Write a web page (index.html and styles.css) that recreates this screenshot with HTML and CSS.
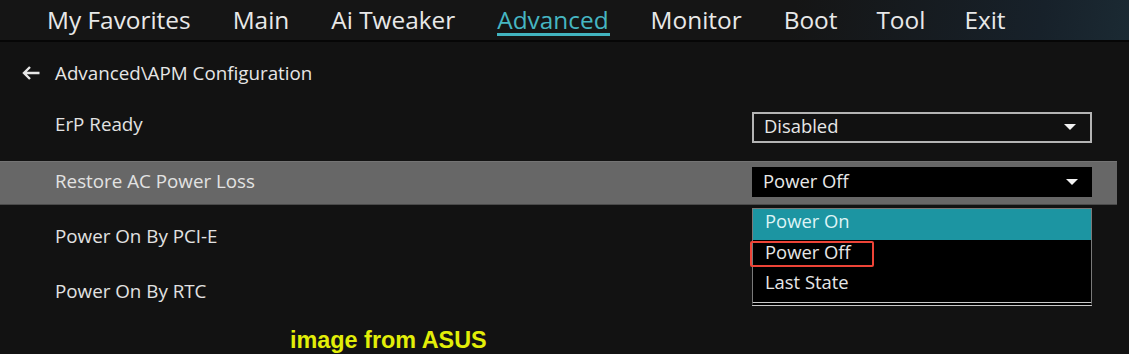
FILE: index.html
```html
<!DOCTYPE html>
<html lang="en">
<head>
<meta charset="utf-8">
<title>Advanced\APM Configuration</title>
<link rel="stylesheet" href="styles.css">
</head>
<body>
<div class="screen">
  <nav class="tabs">
    <span class="tab">My Favorites</span>
    <span class="tab">Main</span>
    <span class="tab">Ai Tweaker</span>
    <span class="tab active">Advanced</span>
    <span class="tab">Monitor</span>
    <span class="tab">Boot</span>
    <span class="tab">Tool</span>
    <span class="tab">Exit</span>
  </nav>
  <div class="crumb">
    <svg class="back" width="20" height="16" viewBox="0 0 20 16"><path d="M18.5 8H3M9 2L3 8l6 6" fill="none" stroke="#e6e6e6" stroke-width="2.4"/></svg>
    <span>Advanced\APM Configuration</span>
  </div>
  <div class="rows">
    <div class="row">
      <span class="label">ErP Ready</span>
      <div class="select outline"><span>Disabled</span><i class="caret"></i></div>
    </div>
    <div class="row selected">
      <span class="label">Restore AC Power Loss</span>
      <div class="select solid"><span>Power Off</span><i class="caret"></i>
        <ul class="menu">
          <li class="hl">Power On</li>
          <li>Power Off</li>
          <li>Last State</li>
        </ul>
        <div class="mark"></div>
      </div>
    </div>
    <div class="row">
      <span class="label">Power On By PCI-E</span>
    </div>
    <div class="row">
      <span class="label">Power On By RTC</span>
    </div>
  </div>
  <div class="credit">image from ASUS</div>
</div>
</body>
</html>
```
FILE: styles.css
```css
html, body {
  margin: 0;
  padding: 0;
  background: #121212;
}
.screen {
  width: 1129px;
  height: 354px;
  overflow: hidden;
  background: #121212;
  font-family: "Open Sans", "DejaVu Sans", sans-serif;
  color: #e2e2e2;
}
.tabs {
  display: flex;
  align-items: flex-start;
  padding-left: 47px;
  background: linear-gradient(100deg, #151515 70%, #17212a 92%, #1b2a33 100%);
  border-bottom: 2px solid #060606;
  box-sizing: border-box;
  height: 42px;
}
.tab {
  font-size: 24.4px;
  line-height: 40px;
  color: #e8e8e8;
  margin-right: 42px;
  position: relative;
}
.tab:nth-child(n+6) { margin-right: 39px; }
.tab.active {
  color: #46b6c2;
}
.tab.active::after {
  content: "";
  position: absolute;
  left: 0;
  right: -1px;
  top: 33px;
  height: 3px;
  background: #42b4c0;
}
.crumb {
  display: flex;
  align-items: center;
  height: 62px;
  padding-left: 21px;
  gap: 14px;
  font-size: 18.8px;
  color: #e6e6e6;
}
.back { display: block; }
.rows {
  display: flex;
  flex-direction: column;
  gap: 11px;
  margin-top: 2px;
}
.row {
  height: 44px;
  display: flex;
  align-items: center;
  padding-left: 55px;
  width: 1117px;
  box-sizing: border-box;
  position: relative;
}
.row:first-child { margin-top: -2px; margin-bottom: 2px; }
.row.selected {
  background: #676767;
  border-top: 1px solid #747474;
  border-bottom: 1px solid #4a4a4a;
}
.label {
  font-size: 18.8px;
  margin-top: -4px;
  flex: 1;
}
.select {
  position: relative;
  width: 340px;
  height: 31px;
  margin-right: 25px;
  box-sizing: border-box;
  display: flex;
  align-items: center;
  padding-left: 10px;
  font-size: 18.4px;
  color: #e8e8e8;
}
.select.outline {
  border: 2px solid #b4b4b4;
  background: #111;
  margin-top: 2px;
}
.select.solid {
  background: #000;
  padding-left: 11px;
  height: 30px;
  margin-top: -2px;
}
.select span { flex: 1; margin-top: -3px; }
.caret {
  width: 0;
  height: 0;
  border-left: 6px solid transparent;
  border-right: 6px solid transparent;
  border-top: 6px solid #f2f2f2;
  margin-right: 14px;
}
.menu {
  position: absolute;
  left: 0;
  top: 41px;
  width: 340px;
  height: 98px;
  margin: 0;
  padding: 0;
  list-style: none;
  background: #000;
  border: 1px solid #7a7a7a;
  border-bottom: 4px double #c8c8c8;
  box-sizing: border-box;
  z-index: 2;
}
.menu li {
  height: 30px;
  line-height: 23px;
  padding-left: 12px;
  font-size: 18.4px;
  color: #e6e6e6;
}
.menu li.hl {
  background: #1c95a2;
  color: #dff4f6;
  height: 31px;
}
.mark {
  position: absolute;
  left: -2px;
  top: 74px;
  width: 124px;
  height: 26px;
  border: 2px solid #ee4437;
  border-radius: 2px;
  box-sizing: border-box;
  z-index: 3;
}
.credit {
  font-family: "Liberation Sans", Arial, sans-serif;
  font-weight: bold;
  font-size: 23.4px;
  line-height: 26px;
  color: #e2ee08;
  padding-left: 290px;
  margin-top: 12px;
}
```
